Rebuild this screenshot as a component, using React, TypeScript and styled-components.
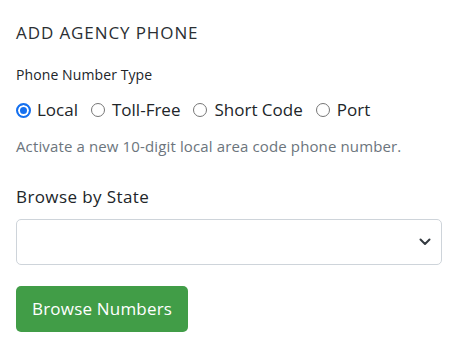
import React, { useState } from "react";
import styled, { createGlobalStyle } from "styled-components";

const GlobalStyle = createGlobalStyle`
  html, body {
    margin: 0;
    padding: 0;
    background: #fff;
  }
  body {
    font-family: "Open Sans", "Noto Sans", sans-serif;
    color: #212529;
  }
`;

const Panel = styled.form`
  padding: 18px 16px 16px;
  width: 426px;
`;

const Title = styled.h2`
  margin: 0 0 16px;
  font-size: 17px;
  font-weight: 400;
  line-height: 30px;
  letter-spacing: 0.9px;
  color: #2b2f33;
  text-transform: uppercase;
`;

const FieldLabel = styled.div<{ $size?: number; $spacing?: number }>`
  font-size: ${(p) => p.$size ?? 14}px;
  letter-spacing: ${(p) => p.$spacing ?? 0.1}px;
  line-height: 1.5;
  margin-bottom: ${(p) => (p.$size ? 8 : 13)}px;
`;

const RadioRow = styled.div`
  display: flex;
  align-items: center;
  gap: 13px;
  margin-bottom: 13px;
`;

const RadioOption = styled.label`
  display: inline-flex;
  align-items: center;
  gap: 7px;
  font-size: 17px;
  line-height: 24px;
  cursor: pointer;
`;

const Radio = styled.input.attrs({ type: "radio" })`
  appearance: none;
  margin: 0;
  width: 14px;
  height: 14px;
  border-radius: 50%;
  border: 1px solid #767676;
  background: #fff;
  flex-shrink: 0;

  &:checked {
    width: 15px;
    height: 15px;
    margin-right: -1px;
    border: 2px solid #1570ef;
    background: #1570ef;
    box-shadow: inset 0 0 0 2px #fff;
  }
`;

const Hint = styled.p`
  margin: 0 0 27px;
  font-size: 15px;
  line-height: 22px;
  letter-spacing: 0.13px;
  color: #6c757d;
`;

const SelectWrap = styled.div`
  position: relative;
  margin-top: 9px;
  margin-bottom: 21px;
`;

const Select = styled.select`
  appearance: none;
  display: block;
  width: 100%;
  height: 46px;
  padding: 0 36px 0 12px;
  font: inherit;
  font-size: 17px;
  color: #212529;
  background: #fff;
  border: 1px solid #ced4da;
  border-radius: 5px;
`;

const Chevron = styled.svg`
  position: absolute;
  right: 11px;
  top: 50%;
  transform: translateY(-50%);
  pointer-events: none;
`;

const SubmitButton = styled.button`
  display: inline-block;
  height: 46px;
  padding: 0 16px;
  font: inherit;
  font-size: 17px;
  letter-spacing: 0.2px;
  color: #fff;
  background: #419d47;
  border: none;
  border-radius: 5px;
  cursor: pointer;
`;

const types = ["Local", "Toll-Free", "Short Code", "Port"];

export default function App() {
  const [type, setType] = useState("Local");

  return (
    <>
      <GlobalStyle />
      <Panel onSubmit={(e) => e.preventDefault()}>
        <Title>Add Agency Phone</Title>

        <FieldLabel>Phone Number Type</FieldLabel>
        <RadioRow>
          {types.map((t) => (
            <RadioOption key={t}>
              <Radio
                name="phoneType"
                checked={type === t}
                onChange={() => setType(t)}
              />
              {t}
            </RadioOption>
          ))}
        </RadioRow>

        <Hint>Activate a new 10-digit local area code phone number.</Hint>

        <FieldLabel $size={17} $spacing={0.4}>
          Browse by State
        </FieldLabel>
        <SelectWrap>
          <Select defaultValue="">
            <option value="" />
          </Select>
          <Chevron width="12" height="8" viewBox="0 0 12 8">
            <path
              d="M1.5 1.5 6 6l4.5-4.5"
              fill="none"
              stroke="#343a40"
              strokeWidth="2"
              strokeLinecap="round"
              strokeLinejoin="round"
            />
          </Chevron>
        </SelectWrap>

        <SubmitButton type="submit">Browse Numbers</SubmitButton>
      </Panel>
    </>
  );
}
